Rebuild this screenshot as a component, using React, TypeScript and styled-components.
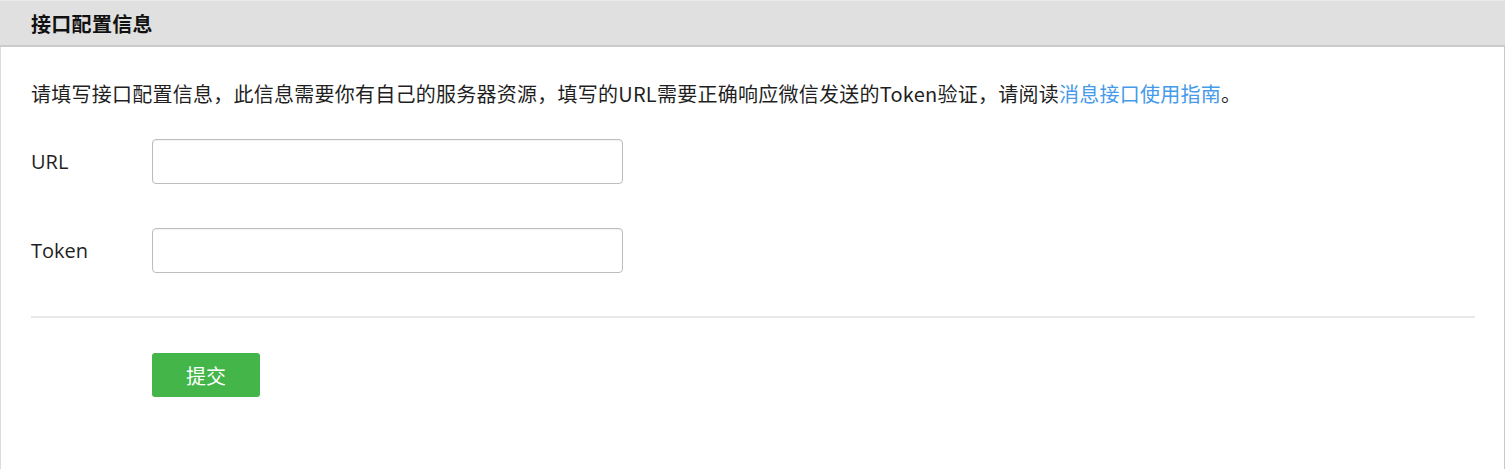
import React from "react";
import styled, { createGlobalStyle } from "styled-components";

const GlobalStyle = createGlobalStyle`
  html, body { margin: 0; padding: 0; background: #fff; }
  body {
    font-family: "Noto Sans", "Noto Sans CJK SC", sans-serif;
    color: #222;
  }
  * { box-sizing: border-box; }
`;

const Panel = styled.section`
  width: 1505px;
  height: 469px;
  border-left: 1px solid #dcdcdc;
  border-right: 1px solid #c9c9c9;
  display: flex;
  flex-direction: column;
`;

const Header = styled.header`
  height: 47px;
  background: #e0e0e0;
  border-top: 1px solid #e9e9e9;
  border-bottom: 2px solid #cbcbcb;
  margin: 0 -1px 0 -1px;
  padding: 0 31px;
  display: flex;
  align-items: center;
`;

const Title = styled.h2`
  margin: 0;
  font-size: 20px;
  font-weight: 700;
  color: #111;
  font-family: "Noto Sans CJK SC", sans-serif;
  letter-spacing: 0.3px;
`;

const Body = styled.div`
  padding: 32px 29px 0 30px;
  display: flex;
  flex-direction: column;
`;

const Desc = styled.p`
  margin: 0;
  font-size: 20px;
  line-height: 30px;
  color: #1f1f1f;
  font-family: "Noto Sans CJK SC", sans-serif;
  letter-spacing: 0.25px;
  white-space: nowrap;
`;

const Link = styled.a`
  color: #459ae9;
  text-decoration: none;
`;

const Form = styled.div`
  margin-top: 30px;
  display: flex;
  flex-direction: column;
  gap: 44px;
`;

const Row = styled.div`
  display: flex;
  align-items: center;
`;

const Label = styled.label`
  width: 121px;
  font-size: 20px;
  color: #1f1f1f;
  font-family: "Open Sans", "Noto Sans CJK SC", sans-serif;
`;

const Input = styled.input`
  width: 471px;
  height: 45px;
  border: 1px solid #bdbdbd;
  border-radius: 4px;
  box-shadow: inset 0 1px 2px rgba(0, 0, 0, 0.06);
  background: #fff;
  font-size: 20px;
  padding: 0 10px;
  outline: none;
`;

const Divider = styled.hr`
  margin: 43px 0 0 0;
  border: 0;
  height: 2px;
  background: #e8e8e8;
`;

const Actions = styled.div`
  padding-left: 121px;
  margin-top: 35px;
`;

const SubmitButton = styled.button`
  width: 108px;
  height: 44px;
  border: 0;
  border-radius: 3px;
  background: #44b549;
  color: #fff;
  font-size: 20px;
  font-family: "Noto Sans CJK SC", sans-serif;
  cursor: pointer;
`;

export default function App() {
  return (
    <>
      <GlobalStyle />
      <Panel>
        <Header>
          <Title>接口配置信息</Title>
        </Header>
        <Body>
          <Desc>
            请填写接口配置信息，此信息需要你有自己的服务器资源，填写的URL需要正确响应微信发送的Token验证，请阅读
            <Link href="#">消息接口使用指南</Link>。
          </Desc>
          <Form>
            <Row>
              <Label>URL</Label>
              <Input type="text" />
            </Row>
            <Row>
              <Label>Token</Label>
              <Input type="text" />
            </Row>
          </Form>
          <Divider />
          <Actions>
            <SubmitButton>提交</SubmitButton>
          </Actions>
        </Body>
      </Panel>
    </>
  );
}
